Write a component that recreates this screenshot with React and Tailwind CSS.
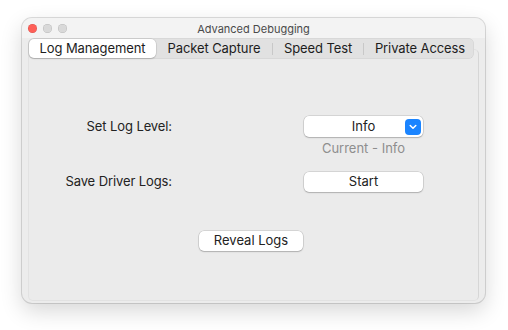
import React from "react";

const tabs = [
  { name: "Log Management", w: "w-[127px]" },
  { name: "Packet Capture", w: "w-[116px]" },
  { name: "Speed Test", w: "w-[90px]" },
  { name: "Private Access", w: "w-[112px]" },
];

function MacButton({ children, className = "" }) {
  return (
    <div
      className={`flex h-[20px] items-center justify-center rounded-[5px] bg-white text-[13px] text-[#222] shadow-[0_0_0_0.5px_rgba(0,0,0,0.18),0_1px_1.5px_rgba(0,0,0,0.18)] ${className}`}
    >
      {children}
    </div>
  );
}

export default function App() {
  return (
    <div
      className="h-[330px] w-[508px] bg-white pl-[22px] pt-[18px]"
      style={{ fontFamily: "Inter, 'Noto Sans', sans-serif" }}
    >
      <div className="flex h-[285px] w-[463px] flex-col overflow-hidden rounded-[10px] bg-[#ececec] shadow-[0_0_0_1px_rgba(0,0,0,0.13),0_8px_22px_rgba(0,0,0,0.16)]">
        {/* title bar */}
        <div className="relative flex h-[20px] items-center bg-[#f3f3f3] pl-[6px]">
          <div className="flex gap-[6px]">
            <span className="h-[9px] w-[9px] rounded-full bg-[#fe5f57] shadow-[inset_0_0_0_0.5px_rgba(0,0,0,0.15)]" />
            <span className="h-[9px] w-[9px] rounded-full bg-[#d9d9d9] shadow-[inset_0_0_0_0.5px_rgba(0,0,0,0.15)]" />
            <span className="h-[9px] w-[9px] rounded-full bg-[#d9d9d9] shadow-[inset_0_0_0_0.5px_rgba(0,0,0,0.15)]" />
          </div>
          <div className="absolute inset-x-0 top-px flex h-[20px] items-center justify-center text-[11px] text-[#4a4a4a]">
            Advanced Debugging
          </div>
        </div>

        <div className="flex flex-1 flex-col px-[6px]">
          {/* segmented tabs */}
          <div className="relative z-10 flex h-[21px] w-[446px] items-center rounded-[6px] bg-[#e1e1e1] p-[1px] shadow-[inset_0_0_0_0.5px_rgba(0,0,0,0.08)]">
            {tabs.map((t, i) => (
              <div key={t.name} className="flex h-full items-center">
                {i > 1 && <span className="h-[12px] w-px bg-[#c8c8c8]" />}
                <div
                  className={`flex h-full ${t.w} items-center justify-center text-[13px] tracking-[-0.1px] text-[#1d1d1d] ${
                    i === 0
                      ? "rounded-[5px] bg-white shadow-[0_0_0_0.5px_rgba(0,0,0,0.12),0_1px_1.5px_rgba(0,0,0,0.15)]"
                      : ""
                  }`}
                >
                  {t.name}
                </div>
              </div>
            ))}
          </div>

          {/* tab box */}
          <div className="-mt-[10px] mb-[2px] flex w-[451px] flex-1 flex-col rounded-[5px] border border-[#e2e2e2] border-r-[#d6d6d6] bg-[#ebebeb] pt-[66px]">
            <div className="grid grid-cols-[143px_132px_119px] items-start">
              <div className="flex h-[21px] items-center justify-end text-[13px] tracking-[-0.1px] text-[#222]">
                Set Log Level:
              </div>
              <div />
              <div className="flex flex-col items-center">
                <div className="relative flex h-[21px] w-[119px] items-center justify-center rounded-[5px] bg-white text-[13px] text-[#222] shadow-[0_0_0_0.5px_rgba(0,0,0,0.18),0_1px_1.5px_rgba(0,0,0,0.18)]">
                  Info
                  <span className="absolute right-[2px] top-[2.5px] flex h-[16px] w-[16px] items-center justify-center rounded-[4px] bg-[#1a84ff]">
                    <svg width="8" height="6" viewBox="0 0 8 6" fill="none">
                      <path d="M1.2 1.5 L4 4.3 L6.8 1.5" stroke="white" strokeWidth="1.5" strokeLinecap="round" strokeLinejoin="round" />
                    </svg>
                  </span>
                </div>
                <div className="mt-[3px] text-[13px] leading-[16px] text-[#8e8e8e]">Current - Info</div>
              </div>
            </div>

            <div className="mt-[16px] grid grid-cols-[143px_132px_119px] items-center">
              <div className="text-right text-[13px] tracking-[-0.1px] text-[#222]">Save Driver Logs:</div>
              <div />
              <MacButton className="w-[119px]">Start</MacButton>
            </div>

            <div className="mt-[39px] pl-[170px]">
              <MacButton className="w-[104px]">Reveal Logs</MacButton>
            </div>
          </div>
        </div>
      </div>
    </div>
  );
}
